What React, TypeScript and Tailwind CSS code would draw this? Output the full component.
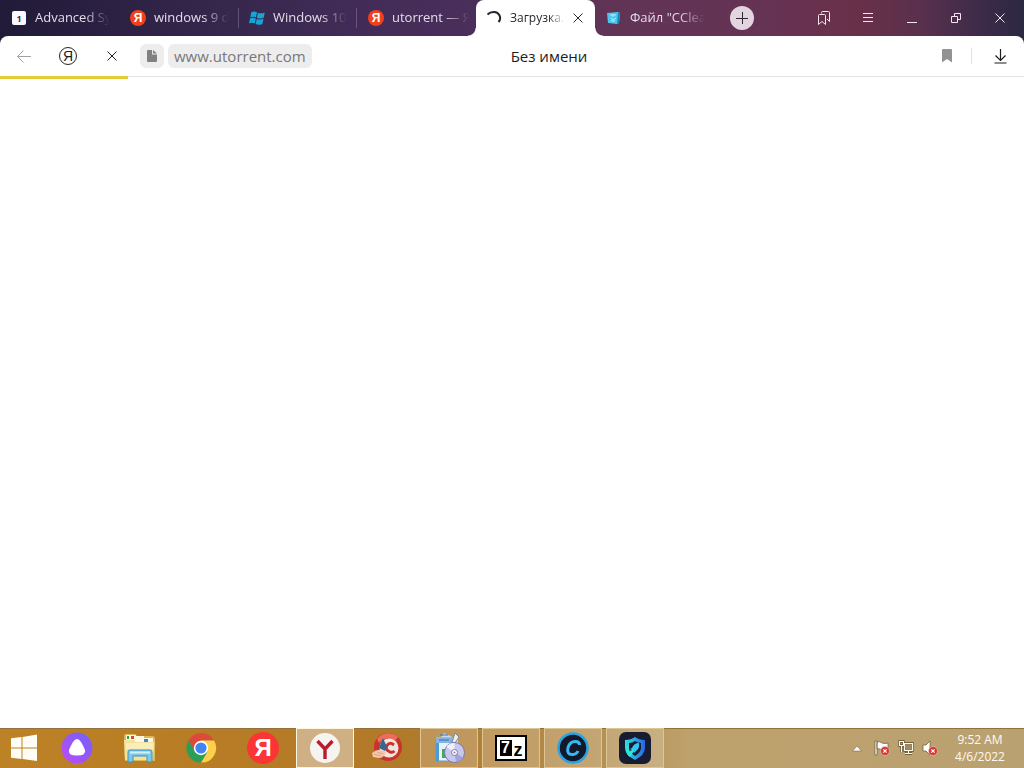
import React, { useState } from 'react';

interface Tab {
  id: number;
  title: string;
  icon: React.ReactNode;
}

const YandexBadge: React.FC = () => (
  <span className="flex size-4 shrink-0 items-center justify-center rounded-full bg-[#f0401c] font-['Liberation_Sans'] text-xs font-bold leading-none text-white">
    Я
  </span>
);

const NumberBadge: React.FC = () => (
  <span className="mx-px flex size-3.5 shrink-0 items-center justify-center rounded-xs bg-[#fbf9ff] text-[9px] font-bold leading-none text-[#35304a]">
    1
  </span>
);

const WindowsFlag: React.FC = () => (
  <svg className="size-4 shrink-0" viewBox="0 0 16 16" fill="#17a5d6">
    <path d="M2.3 2.2Q5 .6 8 2.300L7 7.400Q4.200 6 1.300 7.300Z" />
    <path d="M8.900 2.800Q12 4.100 15.800 2.400L14.700 7.700Q11.500 9.200 7.900 7.900Z" />
    <path d="M1.100 8.300Q4 7 6.800 8.500L5.800 13.600Q3 12.100 0 13.400Z" />
    <path d="M7.700 8.900Q11 10.200 14.500 8.700L13.400 13.900Q10 15.600 6.700 14.100Z" />
  </svg>
);

const Spinner: React.FC = () => (
  <svg className="size-4 shrink-0" viewBox="0 0 16 16" fill="none" stroke="#26242c" strokeWidth="2">
    <path d="M1.500 4.500Q4 2 7.500 2A6 6 0 0 1 12.500 12" />
  </svg>
);

const FileBox: React.FC = () => (
  <svg className="size-4 shrink-0" viewBox="0 0 16 16">
    <path d="M1 3 12 2l2 1-1 10-2 1-9-1Z" fill="#4cc4ec" />
    <path d="M12 2l2 1-1 10-2 1Z" fill="#1789bd" />
    <path d="M4 5h6M7 4v3M5 8l2 2 3-2M5 11h4" stroke="#b4efff" strokeWidth="1" fill="none" />
  </svg>
);

const CloseIcon: React.FC<{ className: string }> = ({ className }) => (
  <svg className={className} viewBox="0 0 10 10" fill="none" stroke="currentColor">
    <path d="M.5.5l9 9M9.500.5l-9 9" />
  </svg>
);

const tabs: Tab[] = [
  { id: 1, title: 'Advanced Sy', icon: <NumberBadge /> },
  { id: 2, title: 'windows 9 d', icon: <YandexBadge /> },
  { id: 3, title: 'Windows 10', icon: <WindowsFlag /> },
  { id: 4, title: 'utorrent — Я', icon: <YandexBadge /> },
  { id: 5, title: 'Загрузка.', icon: <Spinner /> },
  { id: 6, title: 'Файл "CClea', icon: <FileBox /> },
];

const TabItem: React.FC<{ tab: Tab; active: boolean; divider: boolean; onSelect: () => void }> = ({
  tab,
  active,
  divider,
  onSelect,
}) => {
  if (active) {
    return (
      <div className="relative flex h-9 w-[119px] min-w-0 items-center rounded-t-lg bg-white pl-2.5 text-[#29272d]">
        <span className="absolute bottom-0 right-full size-2 bg-[radial-gradient(circle_at_0_0,transparent_7px,white_8px)]" />
        <span className="absolute bottom-0 left-full size-2 bg-[radial-gradient(circle_at_100%_0,transparent_7px,white_8px)]" />
        <button onClick={onSelect} className="flex min-w-0 flex-1 items-center gap-2">
          {tab.icon}
          <span className="flex-1 whitespace-nowrap text-left text-xs [mask-image:linear-gradient(to_right,black_70%,transparent)]">
            {tab.title}
          </span>
        </button>
        <button aria-label="Закрыть вкладку" className="pl-2 pr-3">
          <CloseIcon className="size-2.5" />
        </button>
      </div>
    );
  }
  return (
    <button
      onClick={onSelect}
      className="flex h-9 w-[119px] min-w-0 items-center gap-2 pl-[11px] text-[#e4dbea]"
    >
      {tab.icon}
      <span className="flex-1 whitespace-nowrap text-left text-[13px] [mask-image:linear-gradient(to_right,black_65%,transparent_98%)]">
        {tab.title}
      </span>
      <span className={`h-5 w-px ${divider ? 'bg-white/20' : ''}`} />
    </button>
  );
};

const TitleBar: React.FC = () => {
  const [activeId, setActiveId] = useState<number>(5);

  return (
    <div className="flex h-9 items-center">
      <div className="flex min-w-0">
        {tabs.map((tab) => (
          <TabItem
            key={tab.id}
            tab={tab}
            active={tab.id === activeId}
            divider={tab.id !== activeId - 1}
            onSelect={() => setActiveId(tab.id)}
          />
        ))}
      </div>
      <button
        aria-label="Новая вкладка"
        className="ml-4 flex size-6 shrink-0 items-center justify-center rounded-full bg-[#e2d5df] text-[#302632]"
      >
        <svg className="size-3" viewBox="0 0 12 12" stroke="currentColor">
          <path d="M0 6.500h12M6.500 0v12" />
        </svg>
      </button>
      <div className="ml-auto flex shrink-0 items-center pr-0.5 text-[#f5e6f1]">
        <button aria-label="Закладки" className="flex h-9 w-11 items-center justify-center">
          <svg className="size-4" viewBox="0 0 16 16" fill="none" stroke="currentColor">
            <path d="M5.500 3.500V2.500q0-1 1-1h6q1 0 1 1v9L11 9M3.500 4.500h5q1 0 1 1v9L6 11.500l-3.500 3v-9q0-1 1-1Z" />
          </svg>
        </button>
        <button aria-label="Меню" className="flex h-9 w-11 items-center justify-center">
          <svg className="size-3" viewBox="0 0 12 12" stroke="currentColor">
            <path d="M1 1.500h10M1 5.500h10M1 9.500h10" />
          </svg>
        </button>
        <button aria-label="Свернуть" className="flex h-9 w-11 items-center justify-center">
          <svg className="size-3" viewBox="0 0 12 12" stroke="currentColor">
            <path d="M1 10.500h10" />
          </svg>
        </button>
        <button aria-label="Восстановить" className="flex h-9 w-11 items-center justify-center">
          <svg className="size-3" viewBox="0 0 12 12" fill="none" stroke="currentColor">
            <path d="M1.500 4.500h6v6h-6ZM4.500 4.500v-3h6v6h-3" />
          </svg>
        </button>
        <button aria-label="Закрыть" className="flex h-9 w-11 items-center justify-center">
          <CloseIcon className="size-2.5" />
        </button>
      </div>
    </div>
  );
};

const AddressBar: React.FC = () => (
  <div className="relative flex h-[41px] items-center rounded-t-lg border-b border-[#e4e4e6] bg-white text-[#1d1d1f]">
    <button aria-label="Назад" className="ml-0.5 flex h-10 w-11 items-center justify-center text-[#a2a2a2]">
      <svg className="size-4" viewBox="0 0 16 16" fill="none" stroke="currentColor">
        <path d="M15 8.500H1.500M7.500 2.500l-6 6 6 6" />
      </svg>
    </button>
    <button aria-label="Яндекс" className="flex h-10 w-11 items-center justify-center">
      <span className="flex size-[18px] items-center justify-center rounded-full border border-[#222] font-['Liberation_Sans'] text-sm leading-none">
        Я
      </span>
    </button>
    <button aria-label="Остановить" className="flex h-10 w-11 items-center justify-center">
      <CloseIcon className="size-2.5" />
    </button>
    <button aria-label="О сайте" className="ml-1.5 flex size-6 items-center justify-center rounded-md bg-[#ededed]">
      <svg className="size-4" viewBox="0 0 16 16" fill="#808080">
        <path d="M4 2h4v4.500h5V13q0 1-1 1H4q-1 0-1-1V3q0-1 1-1Z" />
        <path d="M9 2l4 3.500H9Z" />
      </svg>
    </button>
    <input
      type="text"
      aria-label="Адрес"
      defaultValue="www.utorrent.com"
      className="ml-1 h-6 w-[144px] rounded-md bg-[#ededed] px-1.5 text-[15px] text-[#77777b] outline-none"
    />
    <h1 className="absolute left-1/2 -translate-x-1/2 pl-[74px] text-[15px]">Без имени</h1>
    <button aria-label="Добавить в закладки" className="ml-auto flex h-10 w-11 items-center justify-center">
      <svg className="size-4" viewBox="0 0 16 16" fill="#929292">
        <path d="M3 2q0-1 1-1h8q1 0 1 1v12.500L8 11 3 14.500Z" />
      </svg>
    </button>
    <span className="ml-0.5 h-4 w-px bg-[#e2e2e4]" />
    <button aria-label="Загрузки" className="ml-1.5 mr-0.5 flex h-10 w-11 items-center justify-center">
      <svg className="size-4" viewBox="0 0 16 16" fill="none" stroke="currentColor" strokeWidth="1.200">
        <path d="M8.500 1v11M3.500 7.500l5 5 5-5M2.500 15h12" />
      </svg>
    </button>
    <div
      role="progressbar"
      aria-label="Загрузка страницы"
      className="absolute -bottom-[3px] left-0 h-[3px] w-1/8 bg-[#e6cb36]"
    />
  </div>
);

const WindowsLogo: React.FC = () => (
  <svg className="size-7" viewBox="0 0 28 28" fill="#fffdf4">
    <path d="M1 4.300 11.500 3v10.500H1ZM12.500 2.900 27 .5v13H12.500ZM1 14.500h10.500V25L1 23.700ZM12.500 14.500H27v12.500L12.500 25.100Z" />
  </svg>
);

const AliceIcon: React.FC = () => (
  <svg className="size-8" viewBox="0 0 32 32">
    <defs>
      <linearGradient id="alice" x1="0" y1="1" x2="1" y2="0">
        <stop offset="0" stopColor="#c04af5" />
        <stop offset="1" stopColor="#6d63fb" />
      </linearGradient>
    </defs>
    <circle cx="16" cy="16" r="15.500" fill="url(#alice)" />
    <path d="M16 7q2 0 4 3 2.500 4 4 8 1.500 5.500-8 5.500T8 18q1.500-4 4-8 2-3 4-3Z" fill="#fff" />
  </svg>
);

const ExplorerIcon: React.FC = () => (
  <svg className="size-8" viewBox="0 0 32 32">
    <path d="M1 4q0-2 2-2h9l2 2h15q3 0 3 3v22H2Z" fill="#dcb95a" />
    <path d="M3 3h10v6H3ZM11 4h10v6H11ZM20 6h10v5H20Z" fill="#fff8e1" />
    <path d="M4 4h2v3H4Z" fill="#31a24c" />
    <path d="M8 4h3v3H8Z" fill="#d9463b" />
    <path d="M21 7h4v3h-4Z" fill="#3b88cf" />
    <path d="M1 8h10l2 2h18.500L30 28H2Z" fill="#f4e19a" />
    <path d="M3 11h27v6H3Z" fill="#f9edb9" />
    <path d="M5 30V20q0-2 2-2h20q2 0 2 2v10h-5v-6H10v6Z" fill="#7cc8e6" stroke="#3c94bd" />
    <path d="M7 20.500h20" stroke="#cdf0fb" strokeWidth="2" />
  </svg>
);

const ChromeIcon: React.FC = () => (
  <svg className="size-8" viewBox="0 0 32 32">
    <path d="M3.500 8.500a14.500 14.500 0 0 1 25.500 0H16L9.500 19.500Z" fill="#dc4a3c" />
    <path d="M29 8.500A14.500 14.500 0 0 1 16 30.500l6.500-11L16 8.500Z" fill="#fcd04b" />
    <path d="M16 30.500A14.500 14.500 0 0 1 3.500 8.500L9.700 19.500l12.800 0Z" fill="#2a9f59" />
    <circle cx="16" cy="16" r="7.200" fill="#fff" />
    <circle cx="16" cy="16" r="5.600" fill="#4285ec" />
  </svg>
);

const YandexIcon: React.FC = () => (
  <span className="flex size-8 items-center justify-center rounded-full bg-[#fb3535] font-['Liberation_Sans_Narrow','Liberation_Sans'] text-2xl font-bold leading-none text-white">
    Я
  </span>
);

const BrowserIcon: React.FC = () => (
  <svg className="size-8" viewBox="0 0 32 32">
    <circle cx="16" cy="16" r="15" fill="#f6f4f1" />
    <path d="M8.500 9 16 17l7.500-8M16 16.500V27" fill="none" stroke="#b91d2c" strokeWidth="3.400" />
  </svg>
);

const CCleanerIcon: React.FC = () => (
  <svg className="size-8" viewBox="0 0 32 32">
    <circle cx="17" cy="15" r="14" fill="#c9332b" />
    <path d="M6 7A14 14 0 0 1 27 5L24 9Q15 3 8 11Z" fill="#e8705b" />
    <circle cx="18" cy="16" r="9.500" fill="#f0e6df" />
    <path d="M23 13Q18.500 9.500 16 13.500T19 20Q21.500 21 23.500 19" fill="none" stroke="#cf3029" strokeWidth="3" />
    <path d="M12 6l4 9-2 4-6-3Z" fill="#2e6b94" />
    <path d="M1 21q5-4 9-3l5 2q-2 6-7 6l-6-1Z" fill="#f4c6aa" />
    <path d="M3 22l7 2M6 20l6 2" stroke="#e2a283" />
  </svg>
);

const InstallerIcon: React.FC = () => (
  <svg className="size-8" viewBox="0 0 32 32">
    <path d="M3 5h5l3-4 8 4h6v24H3Z" fill="#c5def0" />
    <path d="M3 6h17v23H3Z" fill="#e5f1fb" stroke="#5d9ccd" />
    <path d="M3 6h18v5H3Z" fill="#82b5e3" />
    <path d="M6 8h10M7 3h8" stroke="#3c6db4" />
    <path d="M3 11h3v18H3Z" fill="#4e9bd4" />
    <path d="M9 17h6v9H9Z" fill="#3fac50" />
    <path d="M22 1l4 4-4 6-3-1Z" fill="#ececf2" stroke="#7d8498" />
    <circle cx="21.500" cy="20.500" r="10" fill="#c9c7ec" stroke="#7a77a9" />
    <path d="M21.500 20.500 13.500 15a9 9 0 0 1 8-4Z" fill="#f1effc" />
    <path d="M21.500 20.500l8.500 5a9 9 0 0 1-7 4.500Z" fill="#9fa3df" />
    <circle cx="21.500" cy="20.500" r="3" fill="#fff" stroke="#7877ba" />
    <circle cx="21.500" cy="20.500" r="1" fill="#8f7b9c" />
  </svg>
);

const SevenZipIcon: React.FC = () => (
  <span className="flex h-[26px] w-8 items-center justify-center border-2 border-black bg-white font-['Liberation_Sans'] font-bold text-black">
    <span className="flex h-4 w-3 items-center justify-center bg-black text-base leading-none text-white">7</span>
    <span className="pl-0.5 pt-1 text-lg leading-none">z</span>
  </span>
);

const IObitIcon: React.FC = () => (
  <svg className="size-8" viewBox="0 0 32 32">
    <circle cx="16" cy="16" r="14.500" fill="#13182a" stroke="#29a4e2" strokeWidth="2.500" />
    <path
      d="M22.500 13Q22.500 9.500 18 9.500q-5 0-7 6-1.500 7 4 7 4.500 0 6-3.500"
      fill="none"
      stroke="#34b9f2"
      strokeWidth="3"
    />
  </svg>
);

const ShieldIcon: React.FC = () => (
  <svg className="size-8" viewBox="0 0 32 32">
    <defs>
      <linearGradient id="shield" x1="0" y1="0" x2="1" y2="0">
        <stop offset="0" stopColor="#2ee4df" />
        <stop offset="1" stopColor="#2864e8" />
      </linearGradient>
    </defs>
    <rect width="32" height="32" rx="7" fill="#171c30" />
    <path d="M6 8q6 0 10-3 4 3 10 3v8q0 7-10 12Q6 23 6 16Z" fill="url(#shield)" />
    <path d="M10 11q4 0 6-2 3 2 6 2v5q0 4-6 8-6-4-6-8Z" fill="#171c30" />
    <path d="M20 11q-5 0-7 5l-2 1 2 1 1 1 1 2 2-2q4-3 3-8Z" fill="#31c6f1" />
    <path d="M7 18l3-6v8l4-3 1 2-4 6q-4-3-4-7Z" fill="#2ee4df" />
  </svg>
);

interface TaskbarApp {
  name: string;
  icon: React.ReactNode;
  state: string;
}

const apps: TaskbarApp[] = [
  { name: 'Алиса', icon: <AliceIcon />, state: 'idle' },
  { name: 'Проводник', icon: <ExplorerIcon />, state: 'idle' },
  { name: 'Chrome', icon: <ChromeIcon />, state: 'idle' },
  { name: 'Яндекс', icon: <YandexIcon />, state: 'idle' },
  { name: 'Яндекс Браузер', icon: <BrowserIcon />, state: 'active' },
  { name: 'CCleaner', icon: <CCleanerIcon />, state: 'idle' },
  { name: 'Установщик', icon: <InstallerIcon />, state: 'open' },
  { name: '7-Zip', icon: <SevenZipIcon />, state: 'open' },
  { name: 'Advanced SystemCare', icon: <IObitIcon />, state: 'open' },
  { name: 'Защита', icon: <ShieldIcon />, state: 'open' },
];

const appStyles: Record<string, string> = {
  idle: 'border-transparent',
  open: 'border-[#dcc696] bg-white/20',
  active: 'border-[#fff6de] bg-[#cfb084]',
};

const ErrorBadge: React.FC = () => (
  <>
    <circle cx="11" cy="11" r="4.500" fill="#d43a35" stroke="#f2c9b7" strokeWidth=".6" />
    <path d="M9.300 9.300l3.400 3.400M12.700 9.300l-3.400 3.400" stroke="#fff" strokeWidth="1.200" />
  </>
);

const Tray: React.FC = () => (
  <div className="ml-auto flex shrink-0 items-center">
    <button aria-label="Show hidden icons" className="mr-3">
      <svg className="h-2 w-2.5" viewBox="0 0 10 8">
        <path d="M.5 7 5 2l4.500 5Z" fill="#fff" stroke="#806844" strokeWidth=".6" />
      </svg>
    </button>
    <div className="flex gap-2">
      <button aria-label="Action Center">
        <svg className="size-4" viewBox="0 0 16 16">
          <path d="M1 1h2v14H1ZM3 2q3-1 5 1 3 1 6 0v7q-3 1-6 0-3-2-5-1Z" fill="#fff" stroke="#6a5636" strokeWidth=".7" />
          <ErrorBadge />
        </svg>
      </button>
      <button aria-label="Network">
        <svg className="size-4" viewBox="0 0 16 16" fill="none">
          <path d="M6.500 3.500h8v7h-8ZM10.500 10.500v3M7 13.500h7M1.500 1.500h4v4h-4ZM3.500 5.500v7" stroke="#5e4c30" strokeWidth="2.400" />
          <path d="M6.500 3.500h8v7h-8ZM10.500 10.500v3M7 13.500h7M1.500 1.500h4v4h-4ZM3.500 5.500v7" stroke="#fffaf0" strokeWidth="1.200" />
          <path d="M7.200 4.200h6.600v5.600H7.200Z" fill="#a08a60" />
        </svg>
      </button>
      <button aria-label="Volume">
        <svg className="size-4" viewBox="0 0 16 16">
          <path d="M1 5h3l4-4v14l-4-4H1Z" fill="#fff" stroke="#6a5636" strokeWidth=".7" />
          <ErrorBadge />
        </svg>
      </button>
    </div>
    <div className="ml-1.5 mr-2 w-[72px] text-center text-xs leading-[17px] text-[#fffaf0]">
      <div>9:52 AM</div>
      <div>4/6/2022</div>
    </div>
  </div>
);

const Taskbar: React.FC = () => (
  <footer className="flex h-10 shrink-0 items-center bg-[linear-gradient(to_right,#bd8126,#b57a25_30%,#b07a2d_42%,#b48f52_58%,#bea26d_68%,#baa171)] shadow-[inset_0_1px_#94713a]">
    <button aria-label="Start" className="flex h-full w-12 shrink-0 items-center justify-center">
      <WindowsLogo />
    </button>
    <div className="flex h-full min-w-0 gap-1">
      {apps.map((app) => (
        <button
          key={app.name}
          aria-label={app.name}
          className={`flex h-full w-[58px] items-center justify-center border ${appStyles[app.state]}`}
        >
          {app.icon}
        </button>
      ))}
    </div>
    <Tray />
  </footer>
);

const App: React.FC = () => {
  return (
    <div className="flex h-screen flex-col bg-white font-['Open_Sans','Noto_Sans',sans-serif]">
      <header className="bg-[linear-gradient(to_right,#211a38,#34264b_20%,#422c57_35%,#4b2f5b_48%,#613456_60%,#653354_75%,#693048_84%,#59304d_90%,#3b2b49_96%,#2c2841)]">
        <TitleBar />
        <AddressBar />
      </header>
      <main className="flex-1" />
      <Taskbar />
    </div>
  );
};

export default App;
